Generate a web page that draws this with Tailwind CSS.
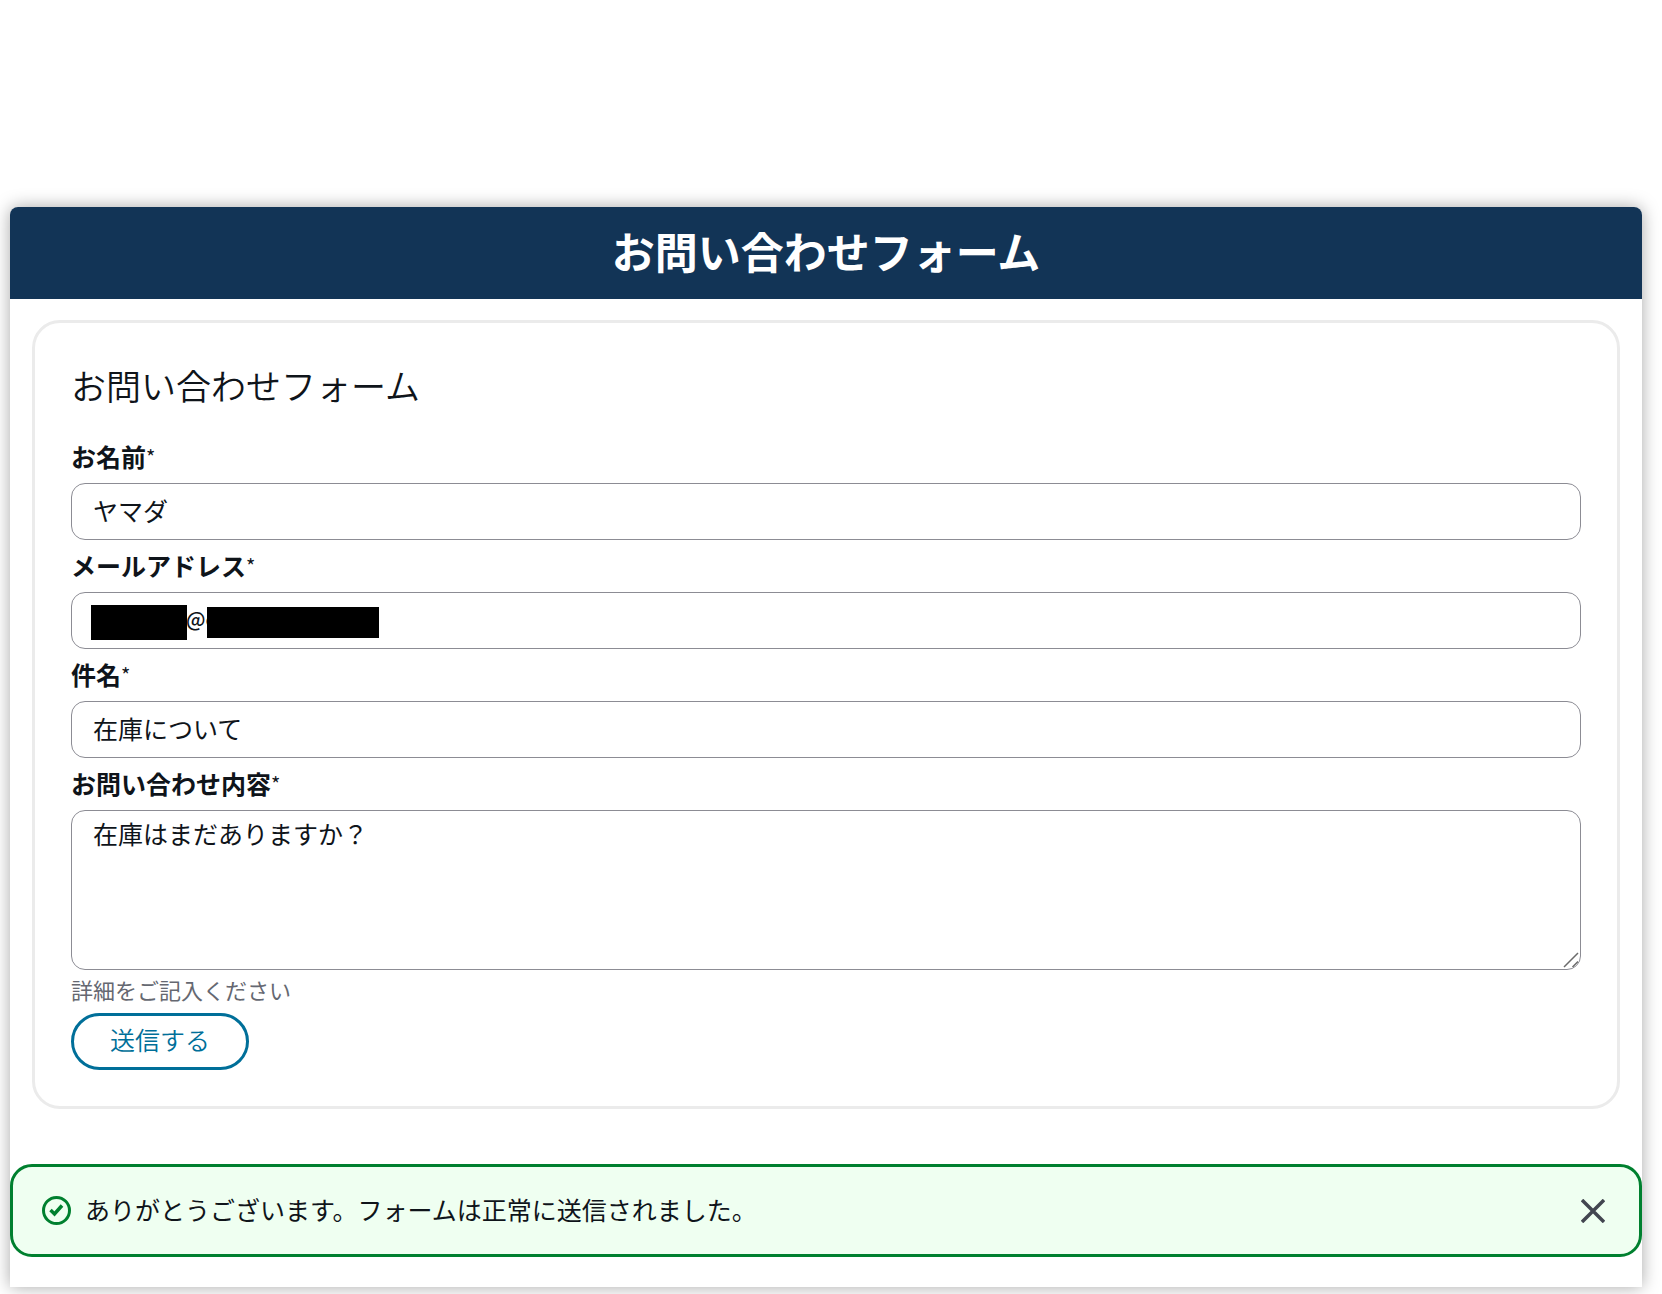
<!DOCTYPE html>
<html lang="ja">
  <head>
    <meta charset="UTF-8" />
    <meta name="viewport" content="width=device-width, initial-scale=1.0" />
    <script src="https://cdn.jsdelivr.net/npm/@tailwindcss/browser@4"></script>
    <title>お問い合わせフォーム</title>
  </head>
  <body class="bg-white text-[#0f141a] font-['Noto_Sans_CJK_JP',sans-serif] pt-[207px] pl-[10px] pr-5 pb-[7px]">
    <main class="bg-white rounded-t-lg shadow-[0_0_17px_rgba(0,0,0,0.35)] pb-[30px]">
      <header class="bg-[#123456] rounded-t-lg pb-1.5">
        <h1 class="text-white text-center text-[43px] leading-[86px] font-bold">お問い合わせフォーム</h1>
      </header>

      <!-- Contact form -->
      <form class="mx-[22px] mt-[21px] p-9 border-3 border-[#ebebeb] rounded-[28px]">
        <h2 class="text-[35px] leading-[52px] font-[350] mb-5">お問い合わせフォーム</h2>

        <label for="name" class="flex items-center h-[52px] text-[25px] font-bold">お名前<span class="text-xl font-normal">*</span></label>
        <input id="name" type="text" value="ヤマダ" class="block w-full h-[57px] px-[21px] pb-1 text-[25px] border border-[#8c8c94] rounded-[14px]" />

        <label for="email" class="flex items-center h-[52px] text-[25px] font-bold">メールアドレス<span class="text-xl font-normal">*</span></label>
        <div class="relative">
          <input id="email" type="text" value="@c" class="block w-full h-[57px] pl-[114px] pr-[21px] pb-1 text-xl font-medium border border-[#8c8c94] rounded-[14px]" />
          <!-- Hidden parts of the address -->
          <span class="absolute left-5 top-[13px] w-24 h-[35px] bg-black"></span>
          <span class="absolute left-[136px] top-[15px] w-[172px] h-[31px] bg-black"></span>
        </div>

        <label for="subject" class="flex items-center h-[52px] text-[25px] font-bold">件名<span class="text-xl font-normal">*</span></label>
        <input id="subject" type="text" value="在庫について" class="block w-full h-[57px] px-[21px] pb-1 text-[25px] border border-[#8c8c94] rounded-[14px]" />

        <label for="message" class="flex items-center h-[52px] text-[25px] font-bold">お問い合わせ内容<span class="text-xl font-normal">*</span></label>
        <div class="relative">
          <textarea id="message" aria-describedby="messageHint" class="block w-full h-40 px-[21px] py-1 text-[25px] leading-9 resize-none border border-[#8c8c94] rounded-[14px]">在庫はまだありますか？</textarea>
          <svg class="absolute right-0.5 bottom-0.5 w-4 h-4 pointer-events-none" viewBox="0 0 16 16" fill="none" stroke="#6b6b6b" stroke-width="1.5">
            <path d="M1 15 15 1M9.500 15l5.500-5.500" />
          </svg>
        </div>
        <p id="messageHint" class="pb-1 text-[22px] leading-[39px] text-[#656871]">詳細をご記入ください</p>

        <button type="button" class="flex items-center h-[57px] px-9 pb-1 text-[25px] font-[350] text-[#006f99] border-3 border-[#006f99] rounded-full">送信する</button>
      </form>

      <!-- Success message -->
      <div role="status" class="mt-[55px] flex items-center h-[93px] pl-[29px] pr-[34px] bg-[#effff1] border-3 border-[#00802f] rounded-[22px]">
        <svg class="w-[29px] h-[29px] mr-3.5 shrink-0" viewBox="0 0 29 29" fill="none" stroke="#00802f" stroke-width="3">
          <circle cx="14.500" cy="14.500" r="13" />
          <path d="m8.500 14 4 4 7.500-8.500" stroke-width="3.500" />
        </svg>
        <p class="flex-1 pb-1 text-[25px] leading-9">ありがとうございます。フォームは正常に送信されました。</p>
        <button type="button" aria-label="閉じる">
          <svg class="w-6 h-6" viewBox="0 0 24 24" fill="none" stroke="#424650" stroke-width="3.500">
            <path d="m1 1 22 22M23 1 1 23" />
          </svg>
        </button>
      </div>
    </main>
  </body>
</html>
